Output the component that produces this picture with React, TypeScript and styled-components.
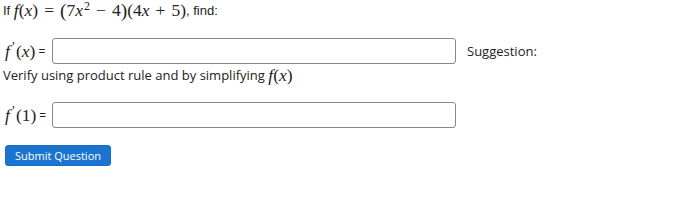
import React from "react";
import styled, { createGlobalStyle } from "styled-components";

const Global = createGlobalStyle`
  body {
    margin: 0;
    background: #fff;
    color: #222;
    font-family: "Open Sans", sans-serif;
  }
`;

const Page = styled.div`
  padding: 1px 0 0 3px;
`;

const Prompt = styled.div`
  font-family: "Liberation Sans", Arial, sans-serif;
  font-size: 13px;
  height: 19px;
  display: flex;
  align-items: center;
`;

const M = styled.span<{ $i?: boolean; $big?: boolean }>`
  font-family: "Liberation Serif", "Times New Roman", serif;
  font-style: ${(p) => (p.$i ? "italic" : "normal")};
  font-size: ${(p) => (p.$big ? "19.5px" : "17.5px")};
  line-height: 19px;
`;

const Prime = styled.span`
  font-family: "Liberation Serif", serif;
  font-size: 14px;
  line-height: 14px;
  margin: 0 1px 0 2px;
  position: relative;
  top: -3px;
`;

const Sup = styled.span`
  font-family: "Liberation Serif", serif;
  font-size: 12px;
  line-height: 12px;
  position: relative;
  top: -5px;
  margin-left: 1px;
`;

const Op = styled.span`
  font-family: "Liberation Serif", serif;
  font-size: 17.5px;
  line-height: 19px;
  margin: 0 6px;
`;

const Row = styled.div<{ $top: number }>`
  display: flex;
  align-items: center;
  margin-top: ${(p) => p.$top}px;
  height: 26px;
`;

const Label = styled.span`
  width: 49px;
  display: flex;
  align-items: center;
  font-size: 13px;
  padding-left: 2px;
  box-sizing: border-box;
`;

const Eq = styled.span`
  font-family: "Open Sans", sans-serif;
  font-size: 12px;
  margin-left: 3px;
`;

const Field = styled.input`
  width: 404px;
  height: 26px;
  box-sizing: border-box;
  border: 1px solid #888;
  border-radius: 3px;
  margin: 0;
  padding: 0 4px;
  background: #fff;
`;

const Hint = styled.span`
  font-size: 13px;
  margin-left: 11px;
  color: #222;
`;

const Note = styled.div`
  font-size: 13px;
  height: 22px;
  display: flex;
  align-items: center;
`;

const Submit = styled.button`
  margin: 17px 0 0 2px;
  width: 106px;
  height: 21px;
  background: #1b75d0;
  color: #fff;
  border: 1px solid #1a6cc0;
  border-radius: 3px;
  font-family: "Open Sans", sans-serif;
  font-size: 11px;
  padding: 0;
`;

export default function App() {
  return (
    <Page>
      <Global />
      <Prompt>
        If&nbsp;
        <M $i>f</M>
        <M>(</M>
        <M $i>x</M>
        <M>)</M>
        <Op>=</Op>
        <M $big>(</M>
        <M>7</M>
        <M $i>x</M>
        <Sup>2</Sup>
        <Op>−</Op>
        <M>4</M>
        <M $big>)</M>
        <M>(4</M>
        <M $i>x</M>
        <Op>+</Op>
        <M>5)</M>, find:
      </Prompt>
      <Row $top={18}>
        <Label>
          <M $i>f</M>
          <Prime>′</Prime>
          <M>(</M>
          <M $i>x</M>
          <M>)</M>
          <Eq>=</Eq>
        </Label>
        <Field />
        <Hint>Suggestion:</Hint>
      </Row>
      <Note>
        Verify using product rule and by simplifying&nbsp;
        <M $i>f</M>
        <M>(</M>
        <M $i>x</M>
        <M>)</M>
      </Note>
      <Row $top={16}>
        <Label>
          <M $i>f</M>
          <Prime>′</Prime>
          <M>(1)</M>
          <Eq>=</Eq>
        </Label>
        <Field />
      </Row>
      <Submit>Submit Question</Submit>
    </Page>
  );
}
